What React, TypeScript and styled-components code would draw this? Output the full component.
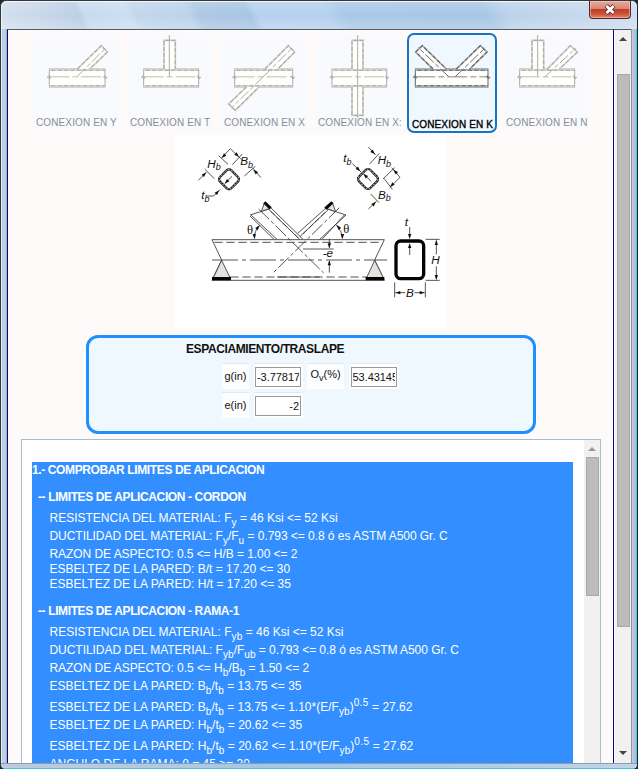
import React from "react";
import styled, { createGlobalStyle, css } from "styled-components";

const GlobalStyle = createGlobalStyle`
  * { box-sizing: border-box; }
  html, body { margin: 0; padding: 0; overflow: hidden; background: #23292b; }
  body { font-family: "Liberation Sans", Arial, sans-serif; color: #111; }
`;

/* ---------- window frame ---------- */

const Window = styled.div`
  display: flex;
  flex-direction: column;
  width: 638px;
  height: 769px;
  overflow: hidden;
  border: 1px solid #33383f;
  border-right-color: #182a30;
  border-bottom: 0;
  border-radius: 6px 6px 5px 5px;
  background: #bcd0e6;
`;

const TitleBar = styled.header`
  display: flex;
  justify-content: flex-end;
  flex: 0 0 28px;
  padding-right: 6px;
  border-top: 1px solid #f2f7fc;
  border-left: 1px solid #eef4fa;
  border-radius: 6px 6px 0 0;
  background:
    linear-gradient(to bottom, rgba(255, 255, 255, 0.16), rgba(255, 255, 255, 0) 50%, rgba(255, 255, 255, 0.2)),
    linear-gradient(65deg, #d3e0ef 0, #c9d8ea 40px, #bccfe4 76px, #c8daee 81px, #cbdef1 120px,
      #c2d7ed 128px, #bdd3ea 175px, #adc8e4 185px, #a8c5e3 230px, #b6d2ef 238px,
      #b5d1ef 300px, #a9c8e7 318px, #a8c7e6 445px, #bbd2eb 465px, #c8d9ed 540px, #d0e0f1 100%);
`;

const CloseButton = styled.button`
  display: flex;
  align-items: center;
  justify-content: center;
  width: 42px;
  height: 18px;
  margin-top: -1px;
  padding: 0;
  border: 1px solid #4f2530;
  border-top: 0;
  border-radius: 0 0 4px 4px;
  box-shadow: inset 0 0 0 1px rgba(255, 205, 190, 0.55);
  background: linear-gradient(#e9aa9c 0, #d98471 46%, #bd3d25 50%, #cf5038 75%, #e08368 100%);
`;

const FrameBody = styled.div`
  display: grid;
  grid-template-columns: 6px 607px 1px 16px 1fr;
  flex: 0 0 734px;
  height: 734px;
`;

const LeftEdge = styled.div`
  border-left: 1px solid #e4edf6;
  background: linear-gradient(to right, #b7cbe2, #c7d6e8 60%, #91a5bd);
`;

const RightEdge = styled.div`
  border-left: 1px solid #8d95a5;
  border-right: 1px solid #46c8e5;
  background: linear-gradient(to right, #d1c9df, #b9bdd6 50%, #9dc9e7);
`;

const FrameGap = styled.div`
  border-top: 1px solid #515c64;
  background: #fbfaf8;
`;

const BottomEdge = styled.footer`
  flex: 1;
  border-top: 1px solid #879eaf;
  border-bottom: 1px solid #43c5e4;
  background: linear-gradient(to right, #bdcbdd, #b2c9df 28%, #a7c7e1 40%, #b0cde5 75%, #c2d5e5);
`;

const Page = styled.main`
  display: flex;
  flex-direction: column;
  align-items: center;
  overflow: hidden;
  padding-left: 1px;
  border-left: 1px solid #08088a;
  border-right: 1px solid #08088a;
  border-top: 1px solid #515c64;
  background: #fffafa;
`;

/* ---------- scroll bars ---------- */

const Track = styled.div<{ $outer?: boolean }>`
  display: flex;
  flex-direction: column;
  align-items: center;
  background: #f1f1f1;
  ${(p) => p.$outer && css`border-top: 1px solid #515c64;`}
`;

const Arrow = styled.span<{ $down?: boolean; $color: string; $space: number }>`
  flex: 0 0 ${(p) => p.$space}px;
  padding-top: ${(p) => (p.$down ? 5 : 7)}px;
  &::after {
    content: "";
    display: block;
    border: 4px solid transparent;
    ${(p) =>
      p.$down
        ? css`border-top-color: ${p.$color}; border-bottom-width: 0;`
        : css`border-bottom-color: ${p.$color}; border-top-width: 0;`}
  }
`;

const Thumb = styled.div<{ $height: number }>`
  flex: 0 0 ${(p) => p.$height}px;
  width: 13px;
  border: 1px solid #a8a8a8;
  background: #bcbcbc;
`;

const Grow = styled.div`
  flex: 1;
`;

/* ---------- connection picker ---------- */

const Picker = styled.nav`
  display: flex;
  gap: 4px;
  margin-top: 3px;
`;

const Tile = styled.button<{ $active?: boolean }>`
  display: flex;
  flex-direction: column;
  width: 90px;
  height: 100px;
  padding: 0;
  overflow: hidden;
  border: 2px solid ${(p) => (p.$active ? "#1874c0" : "transparent")};
  border-radius: ${(p) => (p.$active ? 7 : 2)}px;
  background: ${(p) => (p.$active ? "#f0f8ff" : "#f9fafd")};
  background-clip: padding-box;
  font-family: inherit;
  text-align: left;
  color: ${(p) => (p.$active ? "#000" : "#8b8d92")};
`;

const TileLabel = styled.span<{ $active?: boolean }>`
  margin-left: 3px;
  font-size: 10px;
  line-height: 14px;
  letter-spacing: 0.12px;
  white-space: nowrap;
  ${(p) => p.$active && css`
    margin-top: 2px;
    -webkit-text-stroke: 0.35px #000;
  `}
`;

const TileDrawing = styled.svg`
  flex: none;
  width: 86px;
  height: 81px;
  overflow: visible;
`;

type Pt = [number, number];
type Branch = { shape: [Pt, Pt, Pt, Pt]; axis: [Pt, Pt] };
type Connection = { label: string; chord: [number, number]; branches: Branch[]; active?: boolean };

const connections: Connection[] = [
  {
    label: "CONEXION EN Y",
    chord: [148, 315],
    branches: [{ shape: [[232, 207], [304, 137], [322, 156], [269, 207]], axis: [[232, 229], [318, 143]] }],
  },
  {
    label: "CONEXION EN T",
    chord: [431, 596],
    branches: [{ shape: [[492, 207], [492, 121], [526, 121], [526, 207]], axis: [[508, 230], [508, 103]] }],
  },
  {
    label: "CONEXION EN X",
    chord: [704, 878],
    branches: [
      { shape: [[795, 207], [865, 137], [884, 156], [833, 207]], axis: [[790, 230], [876, 145]] },
      { shape: [[739, 261], [686, 312], [706, 331], [777, 261]], axis: [[790, 230], [694, 324]] },
    ],
  },
  {
    label: "CONEXION EN X:",
    chord: [996, 1160],
    branches: [
      { shape: [[1056, 207], [1056, 121], [1089, 121], [1089, 207]], axis: [[1073, 230], [1073, 105]] },
      { shape: [[1056, 261], [1056, 346], [1089, 346], [1089, 261]], axis: [[1073, 230], [1073, 354]] },
    ],
  },
  {
    label: "CONEXION EN K",
    chord: [1246, 1464],
    active: true,
    branches: [
      { shape: [[1299, 207], [1247, 156], [1267, 137], [1339, 207]], axis: [[1346, 230], [1254, 142]] },
      { shape: [[1369, 207], [1441, 137], [1461, 156], [1409, 207]], axis: [[1366, 230], [1456, 143]] },
    ],
  },
  {
    label: "CONEXION EN N",
    chord: [1559, 1724],
    branches: [
      { shape: [[1596, 207], [1596, 121], [1631, 121], [1631, 207]], axis: [[1613, 230], [1613, 103]] },
      { shape: [[1642, 207], [1711, 137], [1732, 156], [1678, 207]], axis: [[1634, 231], [1727, 145]] },
    ],
  },
];

const toPoints = (pts: Pt[]) => pts.map((p) => p.join(",")).join(" ");

function ConnectionTile({ item, index }: { item: Connection; index: number }) {
  const [l, r] = item.chord;
  const base = item.active ? "#a2a5a8" : "#cfcfcd";
  const dark = item.active ? "#66696c" : "#adaca9";
  return (
    <Tile $active={item.active}>
      <TileDrawing viewBox={`${99 + 282 * index} 105 258 243`} fill="none">
        <rect x={l} y={207} width={r - l} height={54} fill="#fffefa" stroke={dark} strokeWidth={3} />
        <path d={`M${l} 210H${r}M${l} 258H${r}`} stroke={base} strokeWidth={4} />
        <path d={`M${l + 6} 211H${r}M${l + 6} 257H${r}`} stroke={dark} strokeWidth={3} strokeDasharray="12 7" />
        <path
          d={`M${l} 225l-6 7h10l-4 6M${r} 225l-4 7h10l-6 6`}
          stroke={dark}
          strokeWidth={3}
        />
        <path d={`M${l} 230.5H${r}`} stroke={dark} strokeWidth={2.4} strokeDasharray="60 9 18 9" />
        {item.branches.map((b, i) => (
          <g key={i}>
            <polyline points={toPoints(b.shape)} fill="#fffefa" stroke={base} strokeWidth={5} />
            <polyline points={toPoints(b.shape)} stroke={dark} strokeWidth={3.5} strokeDasharray="12 6" />
            <polyline
              points={toPoints(b.axis)}
              stroke={dark}
              strokeWidth={3}
              strokeDasharray={b.axis[0][0] === b.axis[1][0] ? undefined : "34 7 14 7"}
            />
          </g>
        ))}
      </TileDrawing>
      <TileLabel $active={item.active}>{item.label}</TileLabel>
    </Tile>
  );
}

/* ---------- joint drawing ---------- */

const JointSvg = styled.svg`
  flex: none;
  width: 272px;
  height: 193px;
  margin-top: 2px;
  background: #fff;
  text {
    font-family: "Liberation Sans", Arial, sans-serif;
    font-style: italic;
    font-size: 35px;
    fill: #111;
    stroke: none;
  }
  .sub { font-size: 27px; }
  .theta { font-family: "Liberation Serif", serif; font-style: normal; font-size: 38px; }
`;

function Head({ x, y, angle }: { x: number; y: number; angle: number }) {
  return <path d="M0 0l-15 -5v10z" fill="#111" stroke="none" transform={`translate(${x} ${y}) rotate(${angle})`} />;
}

function TubeSection({ x, y }: { x: number; y: number }) {
  return (
    <g transform={`translate(${x} ${y}) rotate(45)`}>
      <rect x={-24} y={-24} width={48} height={48} rx={10} stroke="#222" strokeWidth={7} />
      <rect x={-24} y={-24} width={48} height={48} rx={10} stroke="#b5b5b5" strokeWidth={3} strokeDasharray="5 4" />
    </g>
  );
}

function JointDrawing() {
  return (
    <JointSvg viewBox="12 0 816 579" fill="none" stroke="#333" strokeWidth={2.5}>
      {/* chord */}
      <path d="M123 314H640M123 436H640M123 314L152 375L123 436M640 314L611 375L640 436" />
      <path d="M130 322H632M178 426H590" strokeDasharray="25 11" />
      <path d="M318 426H446" />
      <path d="M123 375H648" strokeDasharray="78 12 12 12" />
      <path d="M152 376L126 430H178ZM611 376L586 430H638Z" fill="#e4e4df" />
      <path d="M123 431H180M584 431H640" stroke="#050505" strokeWidth={10} />
      {/* left branch */}
      <path d="M298 217L396 313M292 222L386 313M240 240L318 313M237 243L309 313M237 240L297 221" />
      <path d="M299 229L382 309" strokeDasharray="17 8" />
      <path d="M281 202L271 229L295 221Z" fill="#e4e4df" />
      <path d="M280 202L299 220" stroke="#050505" strokeWidth={9} />
      <path d="M263 222L458 414" strokeDasharray="44 8 11 8" />
      {/* right branch */}
      <path d="M466 218L380 295M472 224L388 303M525 240L446 313M520 240L453 313M466 221L525 240" />
      <path d="M462 232L388 305" strokeDasharray="17 8" />
      <path d="M484 202L494 230L468 221Z" fill="#e4e4df" />
      <path d="M484 202L463 221" stroke="#050505" strokeWidth={9} />
      <path d="M505 218L306 414" strokeDasharray="44 8 11 8" />
      {/* angles */}
      <path d="M266 272Q248 290 251 310M496 270Q514 288 514 310" />
      <Head x={266} y={271} angle={-50} />
      <Head x={251} y={312} angle={85} />
      <Head x={497} y={270} angle={-130} />
      <Head x={514} y={312} angle={92} />
      <text className="theta" x={228} y={297}>θ</text>
      <text className="theta" x={517} y={295}>θ</text>
      {/* eccentricity */}
      <path d="M396 342H488M475 311V338M475 378V413" />
      <Head x={475} y={340} angle={90} />
      <Head x={475} y={376} angle={-90} />
      <rect x={456} y={348} width={32} height={19} fill="#fff" stroke="none" />
      <text x={455} y={366}>-e</text>
      {/* left section */}
      <TubeSection x={174} y={133} />
      <path d="M152 68L178 41L212 74M143 62L171 88M184 89L214 57M82 136L106 112M101 102L130 131M220 123L253 94M244 98L270 128M183 124L161 146M107 183H128L148 163" />
      <Head x={152} y={69} angle={135} />
      <Head x={204} y={66} angle={45} />
      <Head x={106} y={112} angle={-45} />
      <Head x={247} y={104} angle={-135} />
      <Head x={161} y={146} angle={135} />
      <Head x={145} y={166} angle={-45} />
      <text x={109} y={98}>H<tspan className="sub" dy={7}>b</tspan></text>
      <text x={208} y={91}>B<tspan className="sub" dy={7}>b</tspan></text>
      <text x={91} y={193}>t<tspan className="sub" dy={7}>b</tspan></text>
      {/* right section */}
      <TubeSection x={591} y={132} />
      <path d="M592 36L614 60M596 87L625 55M636 132L671 98M662 98L687 127L656 158M639 130L664 163M599 177L624 203M592 222L617 198M544 86L570 111M578 117L601 140" />
      <Head x={612} y={58} angle={45} />
      <Head x={667} y={104} angle={-135} />
      <Head x={657} y={156} angle={135} />
      <Head x={615} y={200} angle={-45} />
      <Head x={568} y={109} angle={45} />
      <Head x={577} y={116} angle={-135} />
      <text x={620} y={87}>H<tspan className="sub" dy={9}>b</tspan></text>
      <text x={621} y={192}>B<tspan className="sub" dy={7}>b</tspan></text>
      <text x={517} y={82}>t<tspan className="sub" dy={8}>b</tspan></text>
      {/* chord section */}
      <rect x={675} y={318} width={83} height={113} rx={14} stroke="#050505" strokeWidth={10} />
      <path d="M716 276V300M716 333V360M764 313H806M764 436H806M796 316V358M796 394V432M671 442V487M763 442V487M673 473H702M730 473H761" />
      <Head x={716} y={312} angle={90} />
      <Head x={716} y={324} angle={-90} />
      <Head x={796} y={315} angle={-90} />
      <Head x={796} y={435} angle={90} />
      <Head x={673} y={473} angle={180} />
      <Head x={761} y={473} angle={0} />
      <text x={701} y={272}>t</text>
      <text x={781} y={388}>H</text>
      <text x={705} y={486}>B</text>
    </JointSvg>
  );
}

/* ---------- spacing form ---------- */

const FormPanel = styled.section`
  flex: none;
  width: 450px;
  height: 99px;
  margin-top: 7px;
  padding: 4px 0 0 97px;
  border: 3px solid #1e90ff;
  border-radius: 12px;
  background: #f0f8ff;
`;

const FormTitle = styled.h2`
  margin: 0;
  font-size: 12px;
  line-height: 15px;
  letter-spacing: -0.4px;
`;

const FormGrid = styled.div`
  display: grid;
  grid-template-columns: 27px 49px 37px 50px;
  grid-template-rows: 26px 26px;
  column-gap: 4.5px;
  row-gap: 3px;
  margin: 6px 0 0 36px;
`;

const Cell = styled.label<{ $raised?: boolean }>`
  display: flex;
  align-items: ${(p) => (p.$raised ? "flex-start" : "center")};
  justify-content: center;
  padding-top: ${(p) => (p.$raised ? 4 : 0)}px;
  border-top: 1px solid #e2e9ef;
  background: #fcfeff;
  font-size: 11px;
  line-height: 13px;
  sub { font-size: 9px; line-height: 0; vertical-align: -3px; }
`;

const Field = styled.input<{ $end?: boolean }>`
  width: 46px;
  height: 20px;
  padding: 0 1px;
  border: 1px solid #9a9a9a;
  background: #fff;
  color: #111;
  font: 11px "Liberation Sans", Arial, sans-serif;
  letter-spacing: ${(p) => (p.$end ? 0 : -0.05)}px;
  text-align: ${(p) => (p.$end ? "right" : "left")};
`;

/* ---------- results ---------- */

const ResultBox = styled.section`
  display: grid;
  grid-template-columns: 562px 16px;
  flex: none;
  width: 580px;
  height: 420px;
  margin-top: 5px;
  border: 1px solid #a7bed2;
  background: #fff;
`;

const Report = styled.div`
  margin: 22px 11px 0 10px;
  padding-top: 1px;
  background: #338fff;
  color: #fff;
  font-size: 12px;
`;

const Line = styled.p<{ $gap: number; $track: number; $heading?: boolean; $indent: number }>`
  height: 15px;
  margin: 0;
  margin-top: ${(p) => p.$gap}px;
  padding-left: ${(p) => p.$indent}px;
  line-height: 15px;
  white-space: nowrap;
  letter-spacing: ${(p) => p.$track}px;
  font-weight: ${(p) => (p.$heading ? 700 : 400)};
  sub, sup { font-size: 10px; line-height: 0; letter-spacing: 0.1px; }
  sub { vertical-align: -4px; }
  sup { vertical-align: 5px; letter-spacing: 0.4px; }
`;

type Row = { gap: number; text: React.ReactNode; level?: 0 | 1 | 2; track?: number };

const Yb = () => <sub>yb</sub>;
const B = () => <sub>b</sub>;

const rows: Row[] = [
  { gap: 0, level: 0, track: -0.38, text: "1.- COMPROBAR LIMITES DE APLICACION" },
  { gap: 12, level: 1, track: -0.38, text: "-- LIMITES DE APLICACION - CORDON" },
  { gap: 6, text: <>RESISTENCIA DEL MATERIAL: F<sub>y</sub> = 46 Ksi &lt;= 52 Ksi</> },
  { gap: 3, track: -0.05, text: <>DUCTILIDAD DEL MATERIAL: F<sub>y</sub>/F<sub>u</sub> = 0.793 &lt;= 0.8 ó es ASTM A500 Gr. C</> },
  { gap: 3, track: -0.06, text: "RAZON DE ASPECTO: 0.5 <= H/B = 1.00 <= 2" },
  { gap: 0, text: "ESBELTEZ DE LA PARED: B/t = 17.20 <= 30" },
  { gap: 0, text: "ESBELTEZ DE LA PARED: H/t = 17.20 <= 35" },
  { gap: 12, level: 1, track: -0.38, text: "-- LIMITES DE APLICACION - RAMA-1" },
  { gap: 6, text: <>RESISTENCIA DEL MATERIAL: F<Yb /> = 46 Ksi &lt;= 52 Ksi</> },
  { gap: 3, track: -0.05, text: <>DUCTILIDAD DEL MATERIAL: F<Yb />/F<sub>ub</sub> = 0.793 &lt;= 0.8 ó es ASTM A500 Gr. C</> },
  { gap: 3, track: -0.05, text: <>RAZON DE ASPECTO: 0.5 &lt;= H<B />/B<B /> = 1.50 &lt;= 2</> },
  { gap: 3, text: <>ESBELTEZ DE LA PARED: B<B />/t<B /> = 13.75 &lt;= 35</> },
  { gap: 6, text: <>ESBELTEZ DE LA PARED: B<B />/t<B /> = 13.75 &lt;= 1.10*(E/F<Yb />)<sup>0.5</sup> = 27.62</> },
  { gap: 3, text: <>ESBELTEZ DE LA PARED: H<B />/t<B /> = 20.62 &lt;= 35</> },
  { gap: 6, text: <>ESBELTEZ DE LA PARED: H<B />/t<B /> = 20.62 &lt;= 1.10*(E/F<Yb />)<sup>0.5</sup> = 27.62</> },
  { gap: 3, text: "ANGULO DE LA RAMA: θ = 45 >= 30" },
];

const indents = [0, 6, 17.5];

export default function App() {
  return (
    <>
      <GlobalStyle />
      <Window>
        <TitleBar>
          <CloseButton aria-label="Cerrar">
            <svg width="14" height="11" viewBox="0 0 12 10">
              <path d="M2.5 1.5L9.5 8.5M9.5 1.5L2.5 8.5" stroke="#5b3a40" strokeWidth="4" />
              <path d="M2.8 1.8L9.2 8.2M9.2 1.8L2.8 8.2" stroke="#fff" strokeWidth="2.4" />
            </svg>
          </CloseButton>
        </TitleBar>
        <FrameBody>
          <LeftEdge />
          <Page>
            <Picker>
              {connections.map((c, i) => (
                <ConnectionTile key={c.label} item={c} index={i} />
              ))}
            </Picker>
            <JointDrawing />
            <FormPanel>
              <FormTitle>ESPACIAMIENTO/TRASLAPE</FormTitle>
              <FormGrid>
                <Cell>g(in)</Cell>
                <Cell><Field readOnly value="-3.77817" /></Cell>
                <Cell $raised><span>O<sub>v</sub>(%)</span></Cell>
                <Cell><Field readOnly value="53.43145" /></Cell>
                <Cell>e(in)</Cell>
                <Cell><Field readOnly $end value="-2" /></Cell>
              </FormGrid>
            </FormPanel>
            <ResultBox>
              <Report>
                {rows.map((r, i) => (
                  <Line
                    key={i}
                    $gap={r.gap}
                    $track={r.track ?? 0}
                    $heading={(r.level ?? 2) < 2}
                    $indent={indents[r.level ?? 2]}
                  >
                    {r.text}
                  </Line>
                ))}
              </Report>
              <Track>
                <Arrow $color="#9a9a9a" $space={17} />
                <Thumb $height={139} />
              </Track>
            </ResultBox>
          </Page>
          <FrameGap />
          <Track $outer>
            <Arrow $color="#444" $space={44} />
            <Thumb $height={553} />
            <Grow />
            <Arrow $color="#444" $space={17} $down />
          </Track>
          <RightEdge />
        </FrameBody>
        <BottomEdge />
      </Window>
    </>
  );
}
